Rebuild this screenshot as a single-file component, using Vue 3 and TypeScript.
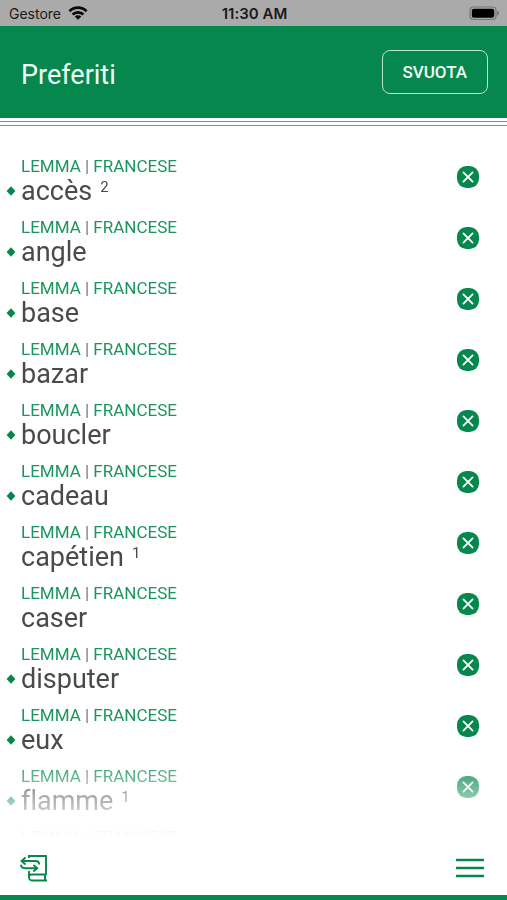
<script setup lang="ts">
interface Favourite {
  word: string
  homograph?: number
  essential: boolean
}

const favourites: Favourite[] = [
  { word: 'accès', homograph: 2, essential: true },
  { word: 'angle', essential: true },
  { word: 'base', essential: true },
  { word: 'bazar', essential: true },
  { word: 'boucler', essential: true },
  { word: 'cadeau', essential: true },
  { word: 'capétien', homograph: 1, essential: false },
  { word: 'caser', essential: false },
  { word: 'disputer', essential: true },
  { word: 'eux', essential: true },
  { word: 'flamme', homograph: 1, essential: true },
  { word: '', essential: false },
]
</script>

<template>
  <div class="screen">
    <div class="status">
      <div class="carrier">
        <span>Gestore</span>
        <svg width="20" height="14" viewBox="0 0 20 14" aria-hidden="true">
          <g fill="none" stroke="#080808" stroke-width="2.7">
            <path d="M1.4 5.2a12.2 12.2 0 0 1 17.2 0" />
            <path d="M4.6 8.5a7.7 7.7 0 0 1 10.8 0" />
          </g>
          <path d="M10 13.8 6.7 10.6a4.6 4.6 0 0 1 6.6 0z" fill="#080808" />
        </svg>
      </div>
      <span class="time">11:30 AM</span>
      <svg class="battery" width="31" height="15" viewBox="0 0 31 15" aria-hidden="true">
        <rect x="1" y="1" width="26" height="12.5" rx="3.5" fill="none" stroke="#777" stroke-width="1.2" />
        <rect x="2.8" y="2.8" width="22.4" height="9" rx="2" fill="#000" />
        <path d="M28.2 4.8c2.4.8 2.4 4.2 0 5z" fill="#777" />
      </svg>
    </div>

    <header class="header">
      <h1>Preferiti</h1>
      <button type="button" class="empty">SVUOTA</button>
    </header>
    <div class="rules"></div>

    <main class="content">
      <ul class="list">
        <li v-for="(item, i) in favourites" :key="i" class="row">
          <span class="marker">
            <svg v-if="item.essential" width="10" height="10" viewBox="0 0 10 10" aria-hidden="true">
              <path d="M5 .2 9.4 5 5 9.8.6 5z" fill="#06874d" />
            </svg>
          </span>
          <div class="entry">
            <span class="kind">LEMMA <i>|</i> FRANCESE</span>
            <span v-if="item.word" class="word">{{ item.word }}<sup v-if="item.homograph">{{ item.homograph }}</sup></span>
          </div>
          <button type="button" class="remove" aria-label="Rimuovi">
            <svg width="22" height="22" viewBox="0 0 22 22" aria-hidden="true">
              <rect width="22" height="22" rx="9.5" fill="#06874d" />
              <path d="m6.4 6.4 9.2 9.2m0-9.2-9.2 9.2" stroke="#fff" stroke-width="1.8" stroke-linecap="round" />
            </svg>
          </button>
        </li>
      </ul>
    </main>

    <footer class="footer">
      <button type="button" class="tool" aria-label="Cambia dizionario">
        <svg width="28" height="28" viewBox="0 0 28 28" fill="none" stroke="#06874d" stroke-width="1.9" aria-hidden="true">
          <path d="M9 4V2h17v18.5" />
          <path d="M9 17v6.500a3 3 0 0 0 3 3h15M26.500 20.500H11.500c-1.700 0-2.500 1-2.500 2.500M25 20.500v6" />
          <path d="M5.500 3.500 1.600 7l3.900 3.500M1.800 7h13.400c2.600 0 4 1.200 4 3.400" />
          <path d="m13.400 10.900 3.800 3.300-3.800 3.300M17 14.200H5c-2.600 0-4-1.200-4-3.400" />
        </svg>
      </button>
      <button type="button" class="tool" aria-label="Menu">
        <svg width="28" height="20" viewBox="0 0 28 20" aria-hidden="true">
          <path d="M0 2h28M0 10h28M0 18h28" stroke="#06874d" stroke-width="2.4" />
        </svg>
      </button>
    </footer>
  </div>
</template>

<style>
body {
  margin: 0;
  background: #fff;
}
</style>

<style scoped>
.screen {
  display: flex;
  flex-direction: column;
  height: 100vh;
  background: #fff;
  font-family: Roboto, "Noto Sans", sans-serif;
  font-variant-ligatures: none;
  color: #4a4a4a;
}
button {
  margin: 0;
  padding: 0;
  border: 0;
  background: none;
  font: inherit;
  cursor: pointer;
}
svg {
  display: block;
}
.status {
  display: grid;
  grid-template-columns: 1fr auto 1fr;
  align-items: center;
  flex: none;
  height: 26px;
  padding: 0 7px 0 9px;
  background: #aaa;
  color: #1a1a1a;
  font-family: Inter, sans-serif;
  font-size: 14px;
}
.carrier {
  display: flex;
  align-items: center;
  gap: 7px;
}
.time {
  font-size: 15px;
  font-weight: 600;
}
.battery {
  justify-self: end;
}
.header {
  display: flex;
  align-items: center;
  justify-content: space-between;
  flex: none;
  height: 92px;
  padding: 0 19px 0 21px;
  background: #06874d;
  color: #f2fff6;
}
h1 {
  margin: 0;
  padding-top: 6px;
  font-size: 27px;
  font-weight: 400;
  line-height: 32px;
}
.empty {
  height: 44px;
  padding: 0 20px 0 19px;
  border: 1px solid #b9e6cb;
  border-radius: 8px;
  color: #f2fff6;
  font-size: 17px;
  font-weight: 500;
}
.rules {
  flex: none;
  height: 3px;
  margin-top: 3px;
  border: solid #4fa781;
  border-width: 1px 0;
}
.content {
  flex: 1;
  min-height: 0;
  overflow: hidden;
  mask-image: linear-gradient(to bottom, #000 calc(100% - 86px), transparent calc(100% - 2px));
}
.list {
  margin: 0;
  padding: 31px 28px 0 0;
  list-style: none;
}
.row {
  display: grid;
  grid-template-columns: 21px 1fr 22px;
  height: 61px;
}
.marker {
  padding: 29px 0 0 6px;
}
.entry {
  display: flex;
  flex-direction: column;
}
.kind {
  color: #1b9560;
  font-size: 17px;
  line-height: 18px;
}
.kind i {
  color: #777;
  font-style: normal;
}
.word {
  font-size: 27px;
  line-height: 32px;
}
sup {
  margin-left: 8px;
  font-size: 15px;
  line-height: 0;
  vertical-align: 8px;
}
.remove {
  align-self: start;
  margin-top: 9px;
}
.footer {
  display: flex;
  align-items: center;
  justify-content: space-between;
  flex: none;
  height: 55px;
  padding: 2px 23px 0 20px;
  border-bottom: 5px solid #06874d;
}
</style>
